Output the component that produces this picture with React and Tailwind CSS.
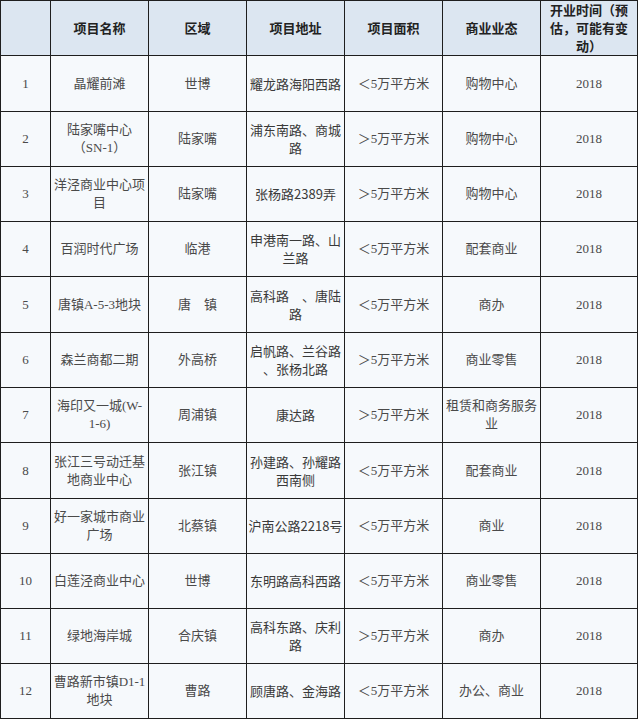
const headers = [[''], ['项目名称'], ['区域'], ['项目地址'], ['项目面积'], ['商业业态'], ['开业时间（预', '估，可能有变', '动）']];

const rows = [
  { tall: true, cells: [['1'], ['晶耀前滩'], ['世博'], ['耀龙路海阳西路'], ['＜5万平方米'], ['购物中心'], ['2018']] },
  { tall: false, cells: [['2'], ['陆家嘴中心', '（SN-1）'], ['陆家嘴'], ['浦东南路、商城', '路'], ['＞5万平方米'], ['购物中心'], ['2018']] },
  { tall: false, cells: [['3'], ['洋泾商业中心项', '目'], ['陆家嘴'], ['张杨路2389弄'], ['＞5万平方米'], ['购物中心'], ['2018']] },
  { tall: false, cells: [['4'], ['百润时代广场'], ['临港'], ['申港南一路、山', '兰路'], ['＜5万平方米'], ['配套商业'], ['2018']] },
  { tall: true, cells: [['5'], ['唐镇A-5-3地块'], ['唐　镇'], ['高科路　、唐陆', '路'], ['＜5万平方米'], ['商办'], ['2018']] },
  { tall: false, cells: [['6'], ['森兰商都二期'], ['外高桥'], ['启帆路、兰谷路', '、张杨北路'], ['＞5万平方米'], ['商业零售'], ['2018']] },
  { tall: false, cells: [['7'], ['海印又一城(W-', '1-6)'], ['周浦镇'], ['康达路'], ['＞5万平方米'], ['租赁和商务服务', '业'], ['2018']] },
  { tall: true, cells: [['8'], ['张江三号动迁基', '地商业中心'], ['张江镇'], ['孙建路、孙耀路', '西南侧'], ['＜5万平方米'], ['配套商业'], ['2018']] },
  { tall: false, cells: [['9'], ['好一家城市商业', '广场'], ['北蔡镇'], ['沪南公路2218号'], ['＜5万平方米'], ['商业'], ['2018']] },
  { tall: false, cells: [['10'], ['白莲泾商业中心'], ['世博'], ['东明路高科西路'], ['＜5万平方米'], ['商业零售'], ['2018']] },
  { tall: false, cells: [['11'], ['绿地海岸城'], ['合庆镇'], ['高科东路、庆利', '路'], ['＞5万平方米'], ['商办'], ['2018']] },
  { tall: false, cells: [['12'], ['曹路新市镇D1-1', '地块'], ['曹路'], ['顾唐路、金海路'], ['＜5万平方米'], ['办公、商业'], ['2018']] },
];

function Lines({ lines }) {
  return lines.map((l, i) => (
    <div key={i} className="whitespace-nowrap">
      {l}
    </div>
  ));
}

export default function App() {
  return (
    <div className="w-[640px] h-[721px] bg-white">
      <table className="table-fixed border-collapse w-[638px] border border-[#1e1e1e] font-['Liberation_Serif','Noto_Sans_CJK_SC',serif] text-[13px]">
        <colgroup>
          <col className="w-[50px]" />
          <col className="w-[98px]" />
          <col className="w-[98px]" />
          <col className="w-[98px]" />
          <col className="w-[98px]" />
          <col className="w-[98px]" />
          <col className="w-[97px]" />
        </colgroup>
        <thead>
          <tr className="h-[55px] bg-[#dce6f1]">
            {headers.map((h, i) => (
              <th
                key={i}
                className="border border-[#1e1e1e] p-0 text-center align-middle font-bold text-[#222] leading-[18px] font-['Noto_Sans_CJK_SC',sans-serif]"
              >
                <Lines lines={h} />
              </th>
            ))}
          </tr>
        </thead>
        <tbody>
          {rows.map((r, ri) => (
            <tr key={ri} className={r.tall ? 'h-[56px] bg-[#f6f9fc]' : 'h-[55px] bg-[#f6f9fc]'}>
              {r.cells.map((c, ci) => (
                <td
                  key={ci}
                  className={
                    ci === 3
                      ? 'border border-[#1e1e1e] p-0 text-center align-middle text-[#3a3a3a] leading-[18px] font-[\'Noto_Sans_CJK_SC\',sans-serif]'
                      : 'border border-[#1e1e1e] p-0 text-center align-middle text-[#4a4a4a] leading-[18px]'
                  }
                >
                  <Lines lines={c} />
                </td>
              ))}
            </tr>
          ))}
        </tbody>
      </table>
    </div>
  );
}
